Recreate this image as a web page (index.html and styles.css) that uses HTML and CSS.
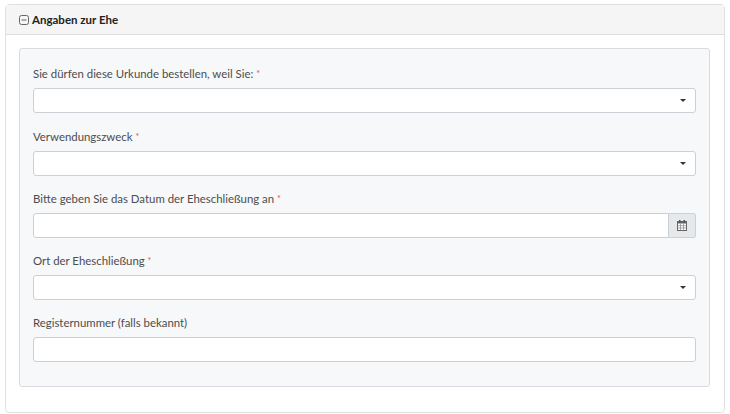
FILE: index.html
```html
<!DOCTYPE html>
<html lang="de">
<head>
  <meta charset="UTF-8">
  <title>Angaben zur Ehe</title>
  <link rel="stylesheet" href="styles.css">
</head>
<body>
  <section class="panel">
    <div class="panel-heading">
      <svg class="toggle-icon" width="10" height="10" viewBox="0 0 10 10">
        <rect x="0.5" y="0.5" width="9" height="9" rx="2" fill="none" stroke="#666" stroke-width="1"/>
        <path d="M2.5 5H7.5" stroke="#666" stroke-width="1"/>
      </svg>
      <span>Angaben zur Ehe</span>
    </div>
    <div class="panel-body">
      <form class="well">
        <div class="form-group">
          <label>Sie dürfen diese Urkunde bestellen, weil Sie: <span class="required">*</span></label>
          <div class="select-wrap"><select class="form-control"></select></div>
        </div>
        <div class="form-group">
          <label>Verwendungszweck <span class="required">*</span></label>
          <div class="select-wrap"><select class="form-control"></select></div>
        </div>
        <div class="form-group">
          <label>Bitte geben Sie das Datum der Eheschließung an <span class="required">*</span></label>
          <div class="input-group">
            <input type="text" class="form-control">
            <span class="input-addon">
              <svg width="10" height="11" viewBox="0 0 10 11">
                <rect x="0.5" y="1.5" width="9" height="9" fill="#fff" stroke="#666"/>
                <rect x="0" y="1" width="10" height="2.5" fill="#666"/>
                <rect x="2" y="0" width="1.5" height="2.5" fill="#555"/>
                <rect x="6.5" y="0" width="1.5" height="2.5" fill="#555"/>
                <path d="M3.5 3.5V10M6.5 3.5V10M0.5 5.7H9.5M0.5 8H9.5" stroke="#888" stroke-width="0.7"/>
              </svg>
            </span>
          </div>
        </div>
        <div class="form-group">
          <label>Ort der Eheschließung <span class="required">*</span></label>
          <div class="select-wrap"><select class="form-control"></select></div>
        </div>
        <div class="form-group">
          <label>Registernummer (falls bekannt)</label>
          <input type="text" class="form-control">
        </div>
      </form>
    </div>
  </section>
</body>
</html>
```

FILE: styles.css
```css
body {
  margin: 0;
  padding: 4px 5px 0;
  background-color: #fff;
  font-family: Lato, sans-serif;
  font-size: 11.4px;
  color: #333;
}

.panel {
  width: 720px;
  height: 409px;
  box-sizing: border-box;
  border: 1px solid #e0e0e0;
  border-radius: 4px;
}

.panel-heading {
  display: flex;
  align-items: center;
  gap: 3px;
  height: 30px;
  box-sizing: border-box;
  padding-left: 13px;
  background-color: #f5f5f5;
  border-bottom: 1px solid #ddd;
  font-size: 11.5px;
  font-weight: 700;
  color: #222;
}

.panel-body {
  padding: 13px 14px 0 13px;
}

.well {
  height: 339px;
  box-sizing: border-box;
  padding: 16.45px 13px 0;
  background-color: #f7f8fa;
  border: 1px solid #d8dbe0;
  border-radius: 3px;
}

.form-group {
  margin-bottom: 14.25px;
}

label {
  display: block;
  height: 17px;
  line-height: 17px;
  margin-bottom: 6px;
  color: #4d4d4d;
}

.required {
  color: #d9534f;
  font-size: 9px;
  vertical-align: 1px;
}

.form-control {
  display: block;
  width: 100%;
  height: 25px;
  box-sizing: border-box;
  padding: 0 8px;
  background-color: #fff;
  border: 1px solid #ccd0d6;
  border-radius: 3px;
  font: inherit;
  appearance: none;
  outline: none;
}

.select-wrap {
  position: relative;
}

.select-wrap::after {
  content: "";
  position: absolute;
  right: 10px;
  top: 11px;
  border-left: 3px solid transparent;
  border-right: 3px solid transparent;
  border-top: 3px solid #333;
}

.input-group {
  display: flex;
}

.input-group .form-control {
  flex: 1;
  border-radius: 3px 0 0 3px;
}

.input-addon {
  display: flex;
  align-items: center;
  justify-content: center;
  width: 27px;
  height: 25px;
  box-sizing: border-box;
  background-color: #e6e9ec;
  border: 1px solid #ccd0d6;
  border-left: 0;
  border-radius: 0 3px 3px 0;
}
```
